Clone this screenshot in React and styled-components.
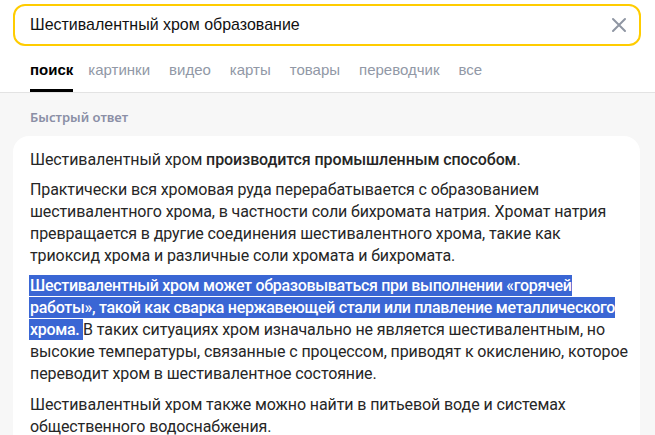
import styled, { createGlobalStyle } from "styled-components";

const GlobalStyle = createGlobalStyle`
  html, body {
    margin: 0;
    padding: 0;
    background: #f7f7f7;
  }
  body {
    font-family: Roboto, "Noto Sans", sans-serif;
    color: #222;
  }
`;

const tabs = ["поиск", "картинки", "видео", "карты", "товары", "переводчик", "все"];

function ClearIcon() {
  return (
    <svg width="16" height="16" viewBox="0 0 16 16">
      <path d="M2 2 L14 14 M14 2 L2 14" stroke="#8f96a3" strokeWidth="2" strokeLinecap="round" />
    </svg>
  );
}

function App() {
  return (
    <Page>
      <GlobalStyle />
      <Header>
        <SearchBox>
          <Query>Шестивалентный хром образование</Query>
          <ClearButton>
            <ClearIcon />
          </ClearButton>
        </SearchBox>
        <Tabs>
          {tabs.map((t, i) => (
            <Tab key={t} $active={i === 0}>{t}</Tab>
          ))}
        </Tabs>
      </Header>
      <Main>
        <SectionTitle>Быстрый ответ</SectionTitle>
        <Card>
          <Para>
            Шестивалентный хром <b>производится промышленным способом</b>.
          </Para>
          <Para>
            Практически вся хромовая руда перерабатывается с образованием
            <br />
            шестивалентного хрома, в частности соли бихромата натрия. Хромат натрия
            <br />
            превращается в другие соединения шестивалентного хрома, такие как
            <br />
            триоксид хрома и различные соли хромата и бихромата.
          </Para>
          <Para>
            <Mark>
              Шестивалентный хром может образовываться при выполнении «горячей
              <br />
              работы», такой как сварка нержавеющей стали или плавление металлического
              <br />
              хрома.{" "}
            </Mark>
            В таких ситуациях хром изначально не является шестивалентным, но
            <br />
            высокие температуры, связанные с процессом, приводят к окислению, которое
            <br />
            переводит хром в шестивалентное состояние.
          </Para>
          <Para $gap={9}>
            Шестивалентный хром также можно найти в питьевой воде и системах
            <br />
            общественного водоснабжения.
          </Para>
        </Card>
      </Main>
    </Page>
  );
}

const Page = styled.div`
  width: 655px;
  height: 435px;
  overflow: hidden;
`;

const Header = styled.div`
  background: #fff;
  padding: 4px 14px 0 13px;
  border-bottom: 1px solid #e3e3e3;
`;

const SearchBox = styled.div`
  display: flex;
  align-items: center;
  height: 38px;
  border: 2px solid #ffcc00;
  border-radius: 12px;
  padding: 0 12px 0 15px;
`;

const Query = styled.div`
  flex: 1;
  font-family: "Liberation Sans", Arial, sans-serif;
  font-size: 17px;
  color: #111;
  transform: scaleX(0.94);
  transform-origin: left center;
`;

const ClearButton = styled.div`
  display: flex;
  align-items: center;
`;

const Tabs = styled.div`
  display: flex;
  gap: 19px;
  padding: 15px 0 0 17px;
`;

const Tab = styled.div`
  font-family: "Liberation Sans", Arial, sans-serif;
  font-size: 15px;
  line-height: 17px;
  padding-bottom: 11px;
  color: ${(p) => (p.$active ? "#000" : "#9198a6")};
  font-weight: ${(p) => (p.$active ? 700 : 400)};
  border-bottom: 3px solid ${(p) => (p.$active ? "#000" : "transparent")};
  margin-right: ${(p) => (p.$active ? "-4px" : "0")};
`;

const Main = styled.div`
  padding: 0 15px 0 13px;
`;

const SectionTitle = styled.div`
  font-family: "Noto Sans", sans-serif;
  font-size: 13px;
  font-weight: 600;
  color: #8b8fa6;
  padding: 15px 17px 0;
  line-height: 18px;
  margin-bottom: 10px;
`;

const Card = styled.div`
  background: #fff;
  border-radius: 16px;
  padding: 13px 17px 10px;
`;

const Para = styled.p`
  margin: ${(p) => (p.$gap ? `${p.$gap}px` : "0")} 0 8px;
  font-size: 16px;
  line-height: 22px;
  color: #262626;
  white-space: nowrap;
  letter-spacing: -0.1px;

  &:first-child {
    margin-top: 0;
  }

  b {
    font-weight: 500;
  }
`;

const Mark = styled.span`
  background: #3a66d4;
  color: #fff;
  font-weight: 500;
  letter-spacing: -0.3px;
  margin-left: -1px;
  padding: 1px 0 1px 1px;
  -webkit-box-decoration-break: clone;
  box-decoration-break: clone;
`;

export default App;
